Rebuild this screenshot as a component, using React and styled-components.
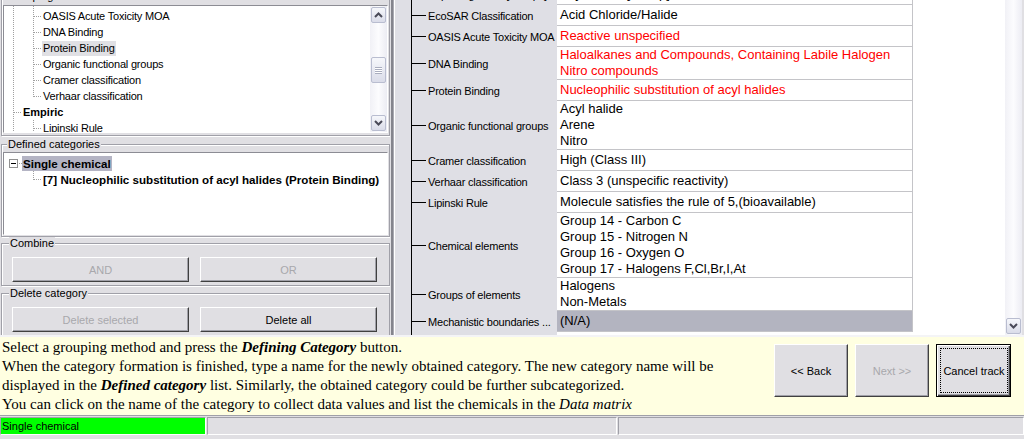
import React from "react";
import styled, { createGlobalStyle } from "styled-components";

const FACE = "#e0dfe3";

const Global = createGlobalStyle`
  html, body { margin: 0; padding: 0; }
  body {
    background: ${FACE};
    font-family: "Liberation Sans", Arial, sans-serif;
    font-size: 11px;
    color: #000;
    overflow: hidden;
  }
  * { box-sizing: border-box; }
`;

const Window = styled.div`
  width: 1024px;
  height: 439px;
  display: flex;
  flex-direction: column;
  background: ${FACE};
  overflow: hidden;
`;

const Main = styled.div`
  display: flex;
  height: 337px;
  flex: none;
  border-bottom: 2px solid #f4f4f6;
`;

/* ---------- left pane ---------- */
const LeftPane = styled.div`
  width: 390px;
  flex: none;
  display: flex;
  flex-direction: column;
  overflow: hidden;
`;

const GroupBox = styled.fieldset`
  margin: ${(p) => p.$mt ?? 0}px 0 0 1px;
  width: 389px;
  padding: ${(p) => p.$pt ?? 0}px 1px ${(p) => p.$pb ?? 0}px 1px;
  border: 1px solid #a0a0a8;
  box-shadow: inset 1px 1px 0 #fff, 1px 1px 0 #fff;
  min-width: 0;
  flex: none;
`;

const Legend = styled.legend`
  margin-left: ${(p) => p.$ml ?? 4}px;
  padding: 0 1px;
  line-height: 13px;
  font-size: 11px;
  background: ${FACE};
`;

const TreeBox = styled.div`
  height: ${(p) => p.$h}px;
  display: flex;
  background: #fff;
  border: 1px solid;
  border-color: #8c8c94 #fff #fff #8c8c94;
  overflow: hidden;
`;

const TreeList = styled.div`
  flex: 1;
  min-width: 0;
  padding-top: ${(p) => p.$pt ?? 0}px;
  overflow: hidden;
`;

const TreeRow = styled.div`
  display: flex;
  align-items: center;
  height: 16px;
  margin-top: ${(p) => p.$mt ?? 0}px;
`;

const dotV = "repeating-linear-gradient(to bottom, #a0a0a0 0 1px, transparent 1px 2px)";
const dotH = "repeating-linear-gradient(to right, #a0a0a0 0 1px, transparent 1px 2px)";
const guideBg = {
  line: `${dotV} 9px 0 / 1px 100% no-repeat`,
  tee: `${dotV} 9px 0 / 1px 100% no-repeat, ${dotH} 10px 8px / 8px 1px no-repeat`,
  end: `${dotV} 9px 0 / 1px 9px no-repeat, ${dotH} 10px 8px / 8px 1px no-repeat`,
  box: `${dotH} 15px 8px / 4px 1px no-repeat`,
  none: "none",
};

const Guide = styled.span`
  width: 20px;
  height: 16px;
  flex: none;
  display: flex;
  align-items: center;
  background: ${(p) => guideBg[p.$k]};
`;

const ExpandBox = styled.span`
  width: 9px;
  height: 9px;
  margin-left: 5px;
  border: 1px solid #919191;
  background: #fff;
  display: flex;
  align-items: center;
  justify-content: center;
  &::after {
    content: "";
    width: 5px;
    height: 1px;
    background: #000;
  }
`;

const NodeLabel = styled.span`
  margin-left: -2px;
  padding: 0 1px;
  height: 15px;
  line-height: 15px;
  white-space: nowrap;
  font-weight: ${(p) => (p.$bold ? 700 : 400)};
  font-size: ${(p) => (p.$big ? "11.6px" : "11px")};
  letter-spacing: ${(p) => (p.$bold ? "0" : "-0.2px")};
  background: ${(p) =>
    p.$sel === "dark" ? "#b4b4c4" : p.$sel === "light" ? "#e0e0e4" : "transparent"};
`;

const VScroll = styled.div`
  width: 17px;
  flex: none;
  display: flex;
  flex-direction: column;
  padding: 1px;
  background: linear-gradient(to right, #f1f1f6, #fcfcfe 50%, #ececf3);
`;

const ScrollBtn = styled.div`
  height: 16px;
  flex: none;
  border: 1px solid #b9bdd0;
  border-radius: 2px;
  background: linear-gradient(#f6f7fb, #dadce9);
  display: flex;
  align-items: center;
  justify-content: center;
  margin-top: ${(p) => (p.$end ? "auto" : "0")};
`;

const Thumb = styled(ScrollBtn)`
  height: 26px;
  margin-top: ${(p) => p.$top}px;
`;

const Grip = styled.span`
  width: 7px;
  height: 7px;
  background: repeating-linear-gradient(to bottom, #a9adbf 0 1px, #fff 1px 2px);
`;

const Chevron = ({ up }) => (
  <svg width="9" height="6" viewBox="0 0 9 6">
    <polyline
      points={up ? "1,5 4.5,1.5 8,5" : "1,1 4.5,4.5 8,1"}
      fill="none"
      stroke="#4a4a58"
      strokeWidth="2"
    />
  </svg>
);

const ButtonRow = styled.div`
  display: grid;
  grid-template-columns: 177px 177px;
  gap: 11px;
  padding-left: 9px;
`;

const Btn = styled.button`
  font-family: "Liberation Sans", Arial, sans-serif;
  font-size: 11px;
  height: ${(p) => p.$h ?? 25}px;
  width: ${(p) => (p.$w ? p.$w + "px" : "auto")};
  padding: 0;
  background: ${FACE};
  color: ${(p) => (p.disabled ? "#a8a8ac" : "#000")};
  border: 1px solid;
  border-color: #fff #404040 #404040 #fff;
  box-shadow: inset -1px -1px 0 #a0a0a8;
  display: flex;
  align-items: center;
  justify-content: center;
`;

const DefaultBtn = styled(Btn)`
  border: 1px solid #000;
  box-shadow: inset 1px 1px 0 #fff, inset -1px -1px 0 #404040, inset -2px -2px 0 #a0a0a8;
  padding: 3px 2px 3px 3px;
  align-items: stretch;
`;

const FocusRing = styled.span`
  flex: 1;
  border: 1px dotted #000;
  display: flex;
  align-items: center;
  justify-content: center;
`;

/* ---------- splitter ---------- */
const Splitter = styled.div`
  width: 6px;
  flex: none;
  background: linear-gradient(
    to right,
    ${FACE} 0 1px,
    #84848c 1px 3px,
    #aaaab2 3px 4px,
    #fff 4px 5px,
    ${FACE} 5px
  );
`;

/* ---------- right pane ---------- */
const RightPane = styled.div`
  flex: 1;
  min-width: 0;
  display: flex;
  padding-right: 2px;
`;

const GridArea = styled.div`
  flex: 1;
  min-width: 0;
  overflow: hidden;
  background: linear-gradient(#000, #000) 15px 0 / 1px 100% no-repeat,
    linear-gradient(to right, #dfdfe5 161px, #fff 161px);
`;

const Table = styled.div`
  display: grid;
  grid-template-columns: 161px 356px;
  margin-top: -16px;
`;

const LabelCell = styled.div`
  display: flex;
  align-items: center;
  white-space: nowrap;
  overflow: hidden;
  font-size: 11px;
  letter-spacing: -0.2px;
`;

const Branch = styled.span`
  width: 14px;
  height: 1px;
  flex: none;
  background: #000;
  margin: 0 2px 0 16px;
`;

const ValueCell = styled.div`
  min-height: 21px;
  display: flex;
  flex-direction: column;
  justify-content: center;
  padding: 0 3px;
  border-bottom: 1px solid #c4c4c8;
  border-right: 1px solid #c4c4c8;
  font-size: 13px;
  line-height: 16px;
  white-space: nowrap;
  overflow: hidden;
  color: ${(p) => (p.$red ? "#ff0000" : "#000")};
  background: ${(p) => (p.$sel ? "#b3b4c0" : "transparent")};
`;

/* ---------- info bar ---------- */
const InfoBar = styled.div`
  height: 79px;
  flex: none;
  display: flex;
  background: #ffffe1;
  border-bottom: 1px solid #a0a0a8;
`;

const InfoText = styled.div`
  flex: 1;
  font-family: "Liberation Serif", "Times New Roman", serif;
  font-size: 15px;
  line-height: 19px;
  padding: 1px 0 0 2px;
  white-space: nowrap;
`;

const Nav = styled.div`
  display: flex;
  gap: 7px;
  padding: 7px 13px 0 0;
  align-items: flex-start;
`;

/* ---------- status bar ---------- */
const StatusBar = styled.div`
  display: flex;
  gap: 1px;
  padding-top: 1px;
  flex: 1;
`;

const StatusPanel = styled.div`
  height: 18px;
  width: ${(p) => (p.$w ? p.$w + "px" : "auto")};
  flex: ${(p) => (p.$w ? "none" : "1")};
  border: 1px solid;
  border-color: #a0a0a8 #fff #fff #a0a0a8;
  background: ${(p) => p.$bg || "transparent"};
  padding-left: 1px;
  line-height: 16px;
  font-size: 11px;
  white-space: nowrap;
`;

/* ---------- data ---------- */
const methodRows = [
  { g: ["line", "tee"], t: "EcoSAR Classification", mt: -14 },
  { g: ["line", "tee"], t: "OASIS Acute Toxicity MOA" },
  { g: ["line", "tee"], t: "DNA Binding" },
  { g: ["line", "tee"], t: "Protein Binding", sel: "light" },
  { g: ["line", "tee"], t: "Organic functional groups" },
  { g: ["line", "tee"], t: "Cramer classification" },
  { g: ["line", "end"], t: "Verhaar classification" },
  { g: ["tee"], t: "Empiric", bold: true },
  { g: ["line", "tee"], t: "Lipinski Rule" },
];

const profile = [
  { label: "Superfragments [Groups]", values: ["Acyl halide [Group]"] },
  { label: "EcoSAR Classification", values: ["Acid Chloride/Halide"] },
  { label: "OASIS Acute Toxicity MOA", values: ["Reactive unspecified"], red: true },
  {
    label: "DNA Binding",
    values: ["Haloalkanes and Compounds, Containing Labile Halogen", "Nitro compounds"],
    red: true,
  },
  { label: "Protein Binding", values: ["Nucleophilic substitution of acyl halides"], red: true },
  { label: "Organic functional groups", values: ["Acyl halide", "Arene", "Nitro"] },
  { label: "Cramer classification", values: ["High (Class III)"] },
  { label: "Verhaar classification", values: ["Class 3 (unspecific reactivity)"] },
  { label: "Lipinski Rule", values: ["Molecule satisfies the rule of 5,(bioavailable)"] },
  {
    label: "Chemical elements",
    values: [
      "Group 14 - Carbon C",
      "Group 15 - Nitrogen N",
      "Group 16 - Oxygen O",
      "Group 17 - Halogens F,Cl,Br,I,At",
    ],
  },
  { label: "Groups of elements", values: ["Halogens", "Non-Metals"] },
  { label: "Mechanistic boundaries ...", values: ["(N/A)"], sel: true },
];

export default function App() {
  return (
    <Window>
      <Global />
      <Main>
        <LeftPane>
          <GroupBox $mt={-10} $pt={2} $pb={2}>
            <Legend>Grouping methods</Legend>
            <TreeBox $h={128}>
              <TreeList>
                {methodRows.map((r) => (
                  <TreeRow key={r.t} $mt={r.mt}>
                    {r.g.map((k, i) => (
                      <Guide key={i} $k={k} />
                    ))}
                    <NodeLabel $bold={r.bold} $sel={r.sel}>
                      {r.t}
                    </NodeLabel>
                  </TreeRow>
                ))}
              </TreeList>
              <VScroll>
                <ScrollBtn>
                  <Chevron up />
                </ScrollBtn>
                <Thumb $top={34}>
                  <Grip />
                </Thumb>
                <ScrollBtn $end>
                  <Chevron />
                </ScrollBtn>
              </VScroll>
            </TreeBox>
          </GroupBox>

          <GroupBox $mt={2} $pt={1} $pb={1}>
            <Legend>Defined categories</Legend>
            <TreeBox $h={83}>
              <TreeList $pt={2}>
                <TreeRow>
                  <Guide $k="box">
                    <ExpandBox />
                  </Guide>
                  <NodeLabel $bold $big $sel="dark">
                    Single chemical
                  </NodeLabel>
                </TreeRow>
                <TreeRow>
                  <Guide $k="none" />
                  <Guide $k="end" />
                  <NodeLabel $bold $big>
                    [7] Nucleophilic substitution of acyl halides (Protein Binding)
                  </NodeLabel>
                </TreeRow>
              </TreeList>
            </TreeBox>
          </GroupBox>

          <GroupBox $pt={7} $pb={3}>
            <Legend $ml={6}>Combine</Legend>
            <ButtonRow>
              <Btn disabled>AND</Btn>
              <Btn disabled>OR</Btn>
            </ButtonRow>
          </GroupBox>

          <GroupBox $mt={1} $pt={7} $pb={3}>
            <Legend $ml={6}>Delete category</Legend>
            <ButtonRow>
              <Btn disabled>Delete selected</Btn>
              <Btn>Delete all</Btn>
            </ButtonRow>
          </GroupBox>
        </LeftPane>

        <Splitter />

        <RightPane>
          <GridArea>
            <Table>
              {profile.map((r) => (
                <React.Fragment key={r.label}>
                  <LabelCell>
                    <Branch />
                    {r.label}
                  </LabelCell>
                  <ValueCell $red={r.red} $sel={r.sel}>
                    {r.values.map((v) => (
                      <div key={v}>{v}</div>
                    ))}
                  </ValueCell>
                </React.Fragment>
              ))}
            </Table>
          </GridArea>
          <VScroll>
            <ScrollBtn $end>
              <Chevron />
            </ScrollBtn>
          </VScroll>
        </RightPane>
      </Main>

      <InfoBar>
        <InfoText>
          Select a grouping method and press the <b><i>Defining Category</i></b> button.
          <br />
          When the category formation is finished, type a name for the newly obtained category. The
          new category name will be
          <br />
          displayed in the <b><i>Defined category</i></b> list. Similarly, the obtained category
          could be further subcategorized.
          <br />
          You can click on the name of the category to collect data values and list the chemicals in
          the <i>Data matrix</i>
        </InfoText>
        <Nav>
          <Btn $w={74} $h={53}>
            {"<< Back"}
          </Btn>
          <Btn $w={74} $h={53} disabled>
            {"Next >>"}
          </Btn>
          <DefaultBtn $w={75} $h={53}>
            <FocusRing>Cancel track</FocusRing>
          </DefaultBtn>
        </Nav>
      </InfoBar>

      <StatusBar>
        <StatusPanel $w={206} $bg="#00ff00">
          Single chemical
        </StatusPanel>
        <StatusPanel $w={410} />
        <StatusPanel />
      </StatusBar>
    </Window>
  );
}
